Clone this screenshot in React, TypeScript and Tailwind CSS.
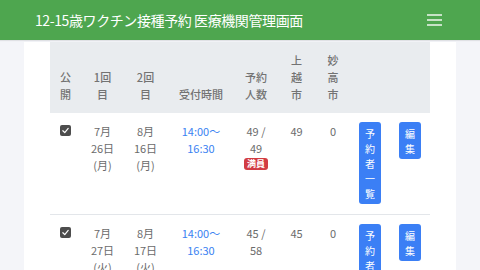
const rows = [
  {
    first: ['7月', '26日', '(月)'],
    second: ['8月', '16日', '(月)'],
    booked: '49 /',
    cap: '49',
    full: true,
    joetsu: '49',
    myoko: '0',
  },
  {
    first: ['7月', '27日', '(火)'],
    second: ['8月', '17日', '(火)'],
    booked: '45 /',
    cap: '58',
    full: false,
    joetsu: '45',
    myoko: '0',
  },
]

const cols = 'grid grid-cols-[31px_43px_43px_68px_42px_39px_34px_40px_40px]'

function Lines({ items }: { items: string[] }) {
  return (
    <div className="flex flex-col items-center">
      {items.map((t, i) => (
        <span key={i}>{t}</span>
      ))}
    </div>
  )
}

function VButton({ label }: { label: string }) {
  return (
    <button className="-mt-px flex w-[22px] flex-col items-center rounded-[3px] bg-[#3b7ff5] py-[3.5px] text-[10px] leading-[15px] text-white">
      {label.split('').map((c, i) => (
        <span key={i}>{c}</span>
      ))}
    </button>
  )
}

function Check() {
  return (
    <span className="mt-[2px] flex h-[11px] w-[11px] items-center justify-center rounded-[2px] bg-[#4d4d4d]">
      <svg viewBox="0 0 12 12" className="h-[9px] w-[9px]">
        <path d="M2.5 6.3 L5 8.8 L9.6 3.2" fill="none" stroke="white" strokeWidth="1.6" strokeLinecap="round" strokeLinejoin="round" />
      </svg>
    </span>
  )
}

export default function App() {
  return (
    <div className="h-[270px] w-[480px] overflow-hidden bg-[#f4f5f9] font-['Noto_Sans_CJK_JP',sans-serif]">
      {/* Top bar */}
      <header className="flex h-[40px] items-center justify-between bg-[#4ea64f] pl-[35px] pr-[38px] shadow-[0_1px_1px_rgba(0,0,0,0.08)]">
        <h1 className="text-[14px] font-normal tracking-[-0.4px] text-white">12-15歳ワクチン接種予約 医療機関管理画面</h1>
        <svg viewBox="0 0 15 12" className="h-[12px] w-[15px]">
          <path d="M0 1h15M0 6h15M0 11h15" stroke="white" strokeWidth="1.5" opacity="0.9" />
        </svg>
      </header>

      <div className="mx-[24px] mt-[2px] bg-white px-[26px]">
        {/* Table head */}
        <div className={`${cols} items-end bg-[#e9ecef] py-[10px] text-center text-[11px] font-medium leading-[17px] text-[#737373]`}>
          <Lines items={['公', '開']} />
          <Lines items={['1回', '目']} />
          <Lines items={['2回', '目']} />
          <div>受付時間</div>
          <Lines items={['予約', '人数']} />
          <Lines items={['上', '越', '市']} />
          <Lines items={['妙', '高', '市']} />
          <div />
          <div />
        </div>

        {rows.map((r, i) => (
          <div key={i} className={`${cols} items-start border-b border-[#e3e6ea] py-[10px] text-center text-[11px] leading-[17px] text-[#6b6b6b]`}>
            <div className="flex justify-center">
              <Check />
            </div>
            <Lines items={r.first} />
            <Lines items={r.second} />
            <div className="flex flex-col items-center text-[#3a82f2]">
              <span>14:00〜</span>
              <span>16:30</span>
            </div>
            <div className="flex flex-col items-center">
              <span>{r.booked}</span>
              <span>{r.cap}</span>
              {r.full && (
                <span className="mt-[1px] rounded-[3px] bg-[#d23c43] px-[3px] text-[9px] font-bold leading-[12px] text-white">満員</span>
              )}
            </div>
            <div>{r.joetsu}</div>
            <div>{r.myoko}</div>
            <div className="flex justify-center">
              <VButton label="予約者一覧" />
            </div>
            <div className="flex justify-center">
              <VButton label="編集" />
            </div>
          </div>
        ))}
      </div>
    </div>
  )
}
